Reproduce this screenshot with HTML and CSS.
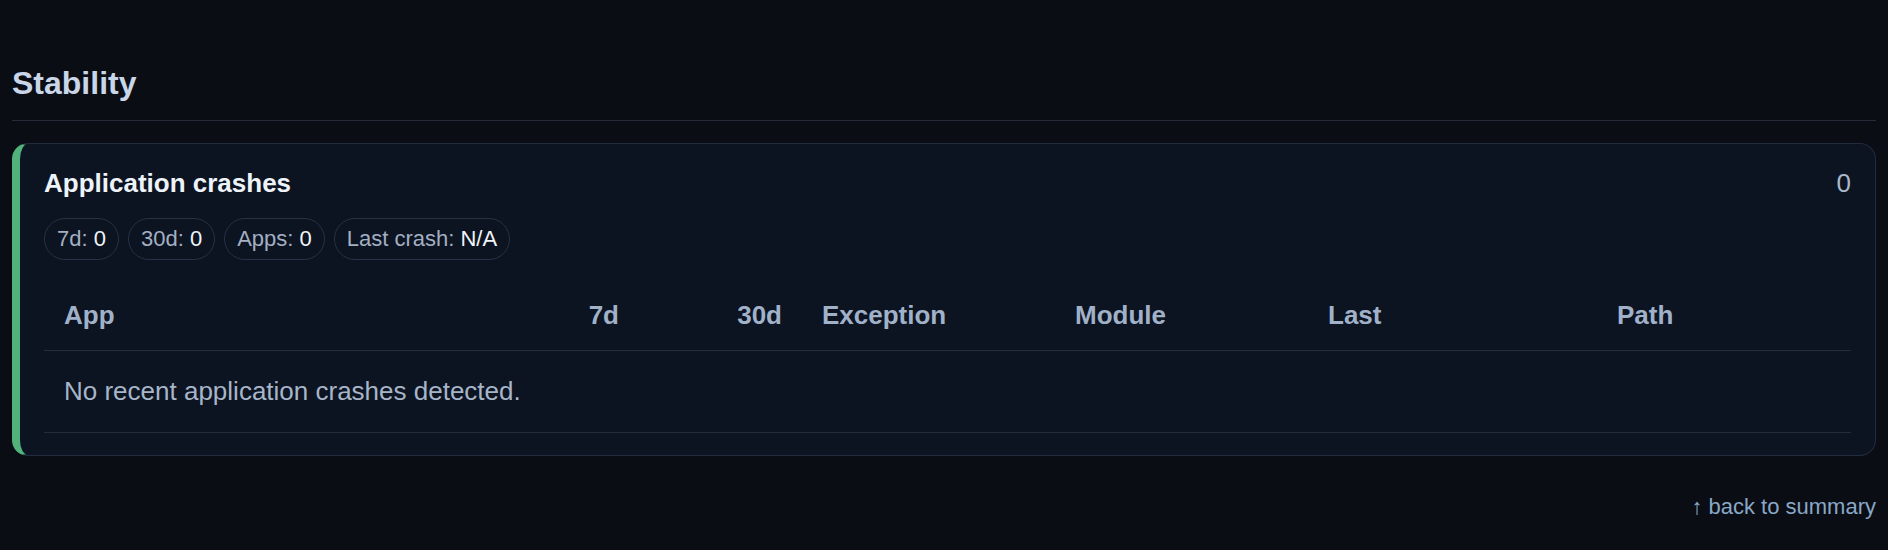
FILE: index.html
```html
<!DOCTYPE html>
<html lang="en">
<head>
<meta charset="utf-8">
<title>Stability</title>
<link rel="stylesheet" href="styles.css">
</head>
<body>
<section class="section">
  <h2 class="section-title">Stability</h2>
  <div class="card">
    <div class="card-head">
      <h3 class="card-title">Application crashes</h3>
      <span class="card-count">0</span>
    </div>
    <div class="chips">
      <span class="chip">7d: <b class="chip-val">0</b></span>
      <span class="chip">30d: <b class="chip-val">0</b></span>
      <span class="chip">Apps: <b class="chip-val">0</b></span>
      <span class="chip">Last crash: <b class="chip-val">N/A</b></span>
    </div>
    <table class="crash-table">
      <colgroup>
        <col class="c-app">
        <col class="c-num">
        <col class="c-num">
        <col class="c-exc">
        <col class="c-mod">
        <col class="c-last">
        <col class="c-path">
      </colgroup>
      <thead>
        <tr>
          <th>App</th>
          <th class="num">7d</th>
          <th class="num">30d</th>
          <th>Exception</th>
          <th>Module</th>
          <th>Last</th>
          <th>Path</th>
        </tr>
      </thead>
      <tbody>
        <tr>
          <td colspan="7" class="empty">No recent application crashes detected.</td>
        </tr>
      </tbody>
    </table>
  </div>
  <div class="back"><a class="back-link" href="#summary">↑ back to summary</a></div>
</section>
</body>
</html>
```
FILE: styles.css
```css
html, body {
  background: #0a0d13;
}
body {
  margin: 0;
  padding: 0 12px;
  font-family: "Liberation Sans", Arial, sans-serif;
  color: #a9b6c8;
}
.section-title {
  margin: 0;
  padding: 65px 0 19px;
  font-size: 32px;
  line-height: 36px;
  font-weight: 700;
  color: #c9d5e8;
  border-bottom: 1px solid #252c38;
}
.card {
  margin-top: 22px;
  background: #0c1321;
  border: 1px solid #232c3e;
  border-left: 8px solid #52b27c;
  border-radius: 16px;
  padding: 24px 24px 22px 24px;
}
.card-head {
  display: flex;
  justify-content: space-between;
  align-items: baseline;
}
.card-title {
  margin: 0;
  font-size: 26px;
  line-height: 30px;
  font-weight: 700;
  color: #eef3fa;
}
.card-count {
  font-size: 26px;
  line-height: 30px;
  color: #a9b8cc;
}
.chips {
  display: flex;
  gap: 9px;
  margin-top: 20px;
}
.chip {
  border: 1px solid #283246;
  border-radius: 999px;
  padding: 8px 12px;
  font-size: 22px;
  line-height: 24px;
  color: #a3afc2;
  white-space: nowrap;
}
.chip-val {
  font-weight: 400;
  color: #f0f4f8;
}
.crash-table {
  width: 100%;
  margin-top: 20px;
  border-collapse: collapse;
  table-layout: fixed;
}
.c-app { width: 432px; }
.c-num { width: 163px; }
.c-exc { width: 253px; }
.c-mod { width: 253px; }
.c-last { width: 289px; }
.c-path { width: 254px; }
.crash-table th {
  padding: 20px 20px;
  font-size: 26px;
  line-height: 30px;
  font-weight: 700;
  text-align: left;
  color: #a0b1c8;
  border-bottom: 1px solid #232c3b;
}
.crash-table th.num {
  text-align: right;
}
.crash-table td {
  padding: 25px 20px 26px;
  font-size: 26px;
  line-height: 30px;
  color: #a7b5c8;
  border-bottom: 1px solid #232c3b;
}
.back {
  margin-top: 38px;
  text-align: right;
  font-size: 22px;
  line-height: 25px;
}
.back-link {
  color: #89a8c8;
  text-decoration: none;
}
```
